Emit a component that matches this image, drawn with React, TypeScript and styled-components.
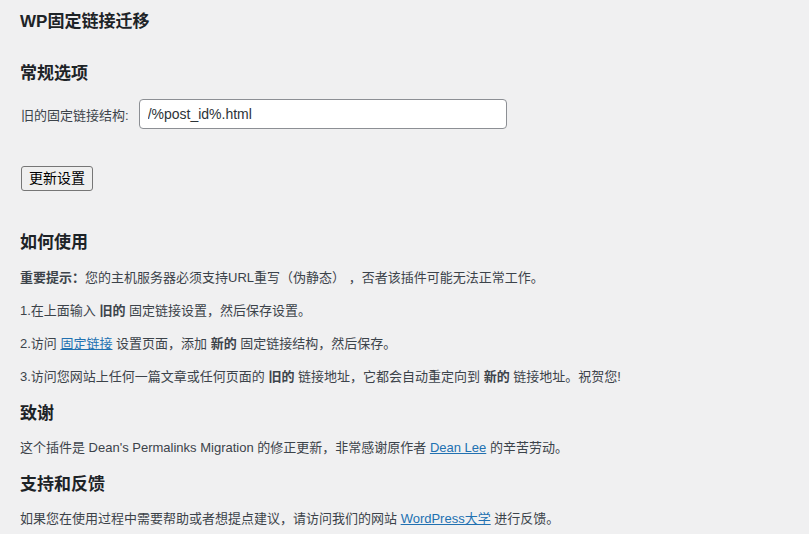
import React from 'react';
import styled, { createGlobalStyle } from 'styled-components';

const GlobalStyle = createGlobalStyle`
  html, body {
    margin: 0;
    padding: 0;
    background: #f0f0f1;
  }
  body {
    font-family: "Liberation Sans", "Noto Sans CJK SC", sans-serif;
    font-size: 13px;
    color: #3c434a;
  }
`;

const Wrap = styled.div`
  padding: 11px 20px 0 20px;
`;

const PageTitle = styled.h1`
  margin: 0 0 30px;
  font-size: 17px;
  line-height: 22px;
  font-weight: 700;
  color: #1d2327;
`;

const SectionTitle = styled.h2<{ $first?: boolean }>`
  margin: ${p => (p.$first ? '0 0 14px' : '16px 0 13px')};
  font-size: 17px;
  line-height: 22px;
  font-weight: 700;
  color: #1d2327;
`;

const FieldRow = styled.div`
  display: flex;
  align-items: center;
  gap: 10px;
`;

const Label = styled.label`
  font-size: 13px;
  color: #3c434a;
  padding-left: 1px;
`;

const TextInput = styled.input`
  box-sizing: border-box;
  width: 368px;
  height: 30px;
  padding: 0 8px;
  border: 1px solid #8c8f94;
  border-radius: 4px;
  background: #fff;
  color: #2c3338;
  font-family: "Liberation Sans", "Noto Sans CJK SC", sans-serif;
  font-size: 14px;
  outline: none;
`;

const SubmitRow = styled.div`
  padding: 37px 0 41px 1px;
`;

const Button = styled.button`
  box-sizing: border-box;
  height: 25px;
  padding: 0 7px;
  border: 1px solid #767676;
  border-radius: 3px;
  background: #efefef;
  color: #000;
  font-family: "Liberation Sans", "Noto Sans CJK SC", sans-serif;
  font-size: 14px;
  line-height: 23px;
  cursor: pointer;
`;

const Para = styled.p`
  margin: 13px 0;
  font-size: 13px;
  line-height: 20px;
`;

const Link = styled.a`
  color: #2271b1;
  text-decoration: underline;
`;

export default function App() {
  return (
    <>
      <GlobalStyle />
      <Wrap>
        <PageTitle>WP固定链接迁移</PageTitle>

        <SectionTitle $first>常规选项</SectionTitle>
        <FieldRow>
          <Label htmlFor="old-structure">旧的固定链接结构:</Label>
          <TextInput id="old-structure" defaultValue="/%post_id%.html" />
        </FieldRow>
        <SubmitRow>
          <Button type="button">更新设置</Button>
        </SubmitRow>

        <SectionTitle $first>如何使用</SectionTitle>
        <Para>
          <strong>重要提示：</strong>您的主机服务器必须支持URL重写（伪静态） ，否者该插件可能无法正常工作。
        </Para>
        <Para>
          1.在上面输入 <strong>旧的</strong> 固定链接设置，然后保存设置。
        </Para>
        <Para>
          2.访问 <Link href="#">固定链接</Link> 设置页面，添加 <strong>新的</strong> 固定链接结构，然后保存。
        </Para>
        <Para>
          3.访问您网站上任何一篇文章或任何页面的 <strong>旧的</strong> 链接地址，它都会自动重定向到 <strong>新的</strong> 链接地址。祝贺您!
        </Para>

        <SectionTitle>致谢</SectionTitle>
        <Para>
          这个插件是 Dean's Permalinks Migration 的修正更新，非常感谢原作者 <Link href="#">Dean Lee</Link> 的辛苦劳动。
        </Para>

        <SectionTitle>支持和反馈</SectionTitle>
        <Para>
          如果您在使用过程中需要帮助或者想提点建议，请访问我们的网站 <Link href="#">WordPress大学</Link> 进行反馈。
        </Para>
      </Wrap>
    </>
  );
}
